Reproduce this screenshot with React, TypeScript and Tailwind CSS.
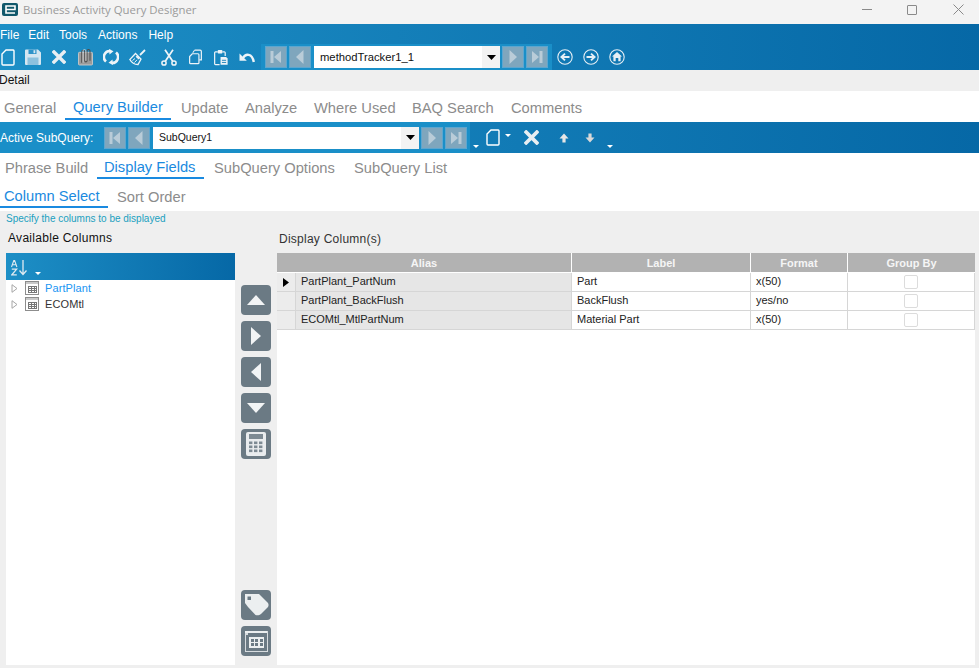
import React from "react";

const F = "[font-family:'Liberation_Sans',Arial,sans-serif]";

function NewDoc({ className = "" }: { className?: string }) {
  return (
    <svg width="14" height="17" viewBox="0 0 14 17" className={className}>
      <path d="M5 1H12.2A1 1 0 0 1 13 2V15A1 1 0 0 1 12 16H2A1 1 0 0 1 1 15V5Z" fill="none" stroke="#fff" strokeWidth="1.4" />
    </svg>
  );
}
const Save = () => (
  <svg width="16" height="16" viewBox="0 0 16 16">
    <path d="M0 1.5A1 1 0 0 1 1 .5H13L16 3.5V15A1 1 0 0 1 15 16H1A1 1 0 0 1 0 15Z" fill="#d5e6f1" />
    <rect x="3.5" y="0.5" width="8" height="4.5" fill="#2f93c9" />
    <rect x="8.5" y="1.2" width="1.8" height="3" fill="#d5e6f1" />
    <rect x="2.5" y="8.5" width="11" height="7.5" fill="#8dc1de" />
  </svg>
);
const Cross = ({ s = 14 }: { s?: number }) => (
  <svg width={s} height={s} viewBox="0 0 14 14">
    <path d="M2 2L12 12M12 2L2 12" stroke="#e8eef2" strokeWidth="3.4" strokeLinecap="square" fill="none" />
  </svg>
);
const Attach = () => (
  <svg width="15" height="18" viewBox="0 0 16 18">
    <rect x="0.5" y="4" width="15" height="13.5" rx="1" fill="#9a9a9a" stroke="#c9c9c9" />
    <path d="M4 15V3.5A1.6 1.6 0 0 1 7.2 3.5V13A1.2 1.2 0 0 0 9.6 13V2.5A1.6 1.6 0 0 1 12.8 2.5V13" fill="none" stroke="#4c4c4c" strokeWidth="1.1" />
    <path d="M5.4 15V2.5A1.5 1.5 0 0 1 8.4 2.5V13" fill="none" stroke="#dcdcdc" strokeWidth="0.8" />
  </svg>
);
const Refresh = () => (
  <svg width="16" height="16" viewBox="0 0 16 16">
    <path d="M3 12.5A6 6 0 0 1 7.5 2" fill="none" stroke="#eef4f8" strokeWidth="2.6" />
    <path d="M6 0L10.5 2.2L6.5 5.5Z" fill="#eef4f8" />
    <path d="M13 3.5A6 6 0 0 1 8.5 14" fill="none" stroke="#eef4f8" strokeWidth="2.6" />
    <path d="M10 16L5.5 13.8L9.5 10.5Z" fill="#eef4f8" />
  </svg>
);
const Broom = () => (
  <svg width="17" height="17" viewBox="0 0 17 17">
    <path d="M11 6L16 1" stroke="#eef4f8" strokeWidth="1.8" fill="none" />
    <path d="M6.5 4.5L12 10L9 15.5C6 15.5 2.5 13.5 0.8 10.5Z" fill="none" stroke="#eef4f8" strokeWidth="1.3" />
    <path d="M8 6.5L10.8 9.2L9.6 10.6L6.6 7.8Z" fill="#eef4f8" />
    <path d="M3.5 11.5L6 9.5M5.5 13.5L8 10.8" stroke="#eef4f8" strokeWidth="1" />
  </svg>
);
const Scissors = () => (
  <svg width="16" height="17" viewBox="0 0 16 17">
    <circle cx="3" cy="14" r="2.1" fill="none" stroke="#eef4f8" strokeWidth="1.5" />
    <circle cx="13" cy="14" r="2.1" fill="none" stroke="#eef4f8" strokeWidth="1.5" />
    <path d="M4.3 12.3L12 .8M11.7 12.3L4 .8" stroke="#eef4f8" strokeWidth="1.7" fill="none" />
  </svg>
);
const Copy = () => (
  <svg width="13" height="16" viewBox="0 0 14 16">
    <path d="M6 .7H12A1.3 1.3 0 0 1 13.3 2V11H11" fill="none" stroke="#eef4f8" strokeWidth="1.3" />
    <path d="M6 .7L4 3.5" fill="none" stroke="#eef4f8" strokeWidth="1.1" />
    <path d="M3.5 4.5H9.7A1 1 0 0 1 10.7 5.5V14.2A1 1 0 0 1 9.7 15.2H1.7A1 1 0 0 1 .7 14.2V7.5Z" fill="#1b87c0" stroke="#eef4f8" strokeWidth="1.3" />
  </svg>
);
const Paste = () => (
  <svg width="14" height="17" viewBox="0 0 15 17">
    <path d="M4 2.5H1.6A.9.9 0 0 0 .7 3.4V15.3A.9.9 0 0 0 1.6 16.2H6M9 2.5H11A.9.9 0 0 1 12 3.4V7" fill="none" stroke="#eef4f8" strokeWidth="1.3" />
    <rect x="4" y="0.5" width="5" height="3.6" rx="0.8" fill="#eef4f8" />
    <path d="M7 8H13L14.6 9.6V16.4H7Z" fill="#eef4f8" />
    <path d="M8.5 11.5H13M8.5 13.8H13" stroke="#1b82bb" strokeWidth="1" />
  </svg>
);
const Undo = () => (
  <svg width="16" height="11" viewBox="0 0 16 11">
    <path d="M4 6C6.5 1.5 13 1 14.8 10" fill="none" stroke="#eef4f8" strokeWidth="2.4" />
    <path d="M.5 1.5V8.8H7.8Z" fill="#eef4f8" />
  </svg>
);
const NavBtn = ({ dir }: { dir: "first" | "prev" | "next" | "last" }) => {
  const f = "#b9ccd8";
  return (
    <div className="flex h-[22px] w-[22px] items-center justify-center border border-[#5da6cf] bg-[#7fa6bd]">
      <svg width="14" height="14" viewBox="0 0 14 14">
        {dir === "first" && <><rect x="1.5" y="1" width="3" height="12" fill={f} /><path d="M12 1V13L5 7Z" fill={f} /></>}
        {dir === "prev" && <path d="M10.5 0V14L3 7Z" fill={f} />}
        {dir === "next" && <path d="M3.5 0V14L11 7Z" fill={f} />}
        {dir === "last" && <><rect x="9.5" y="1" width="3" height="12" fill={f} /><path d="M2 1V13L9 7Z" fill={f} /></>}
      </svg>
    </div>
  );
};
const Combo = ({ text, w, size }: { text: string; w: string; size: string }) => (
  <div className={`flex h-[22px] items-center bg-white pl-[6px] ${w}`}>
    <span className={`flex-1 text-[#111] ${size} ${F}`}>{text}</span>
    <div className="flex h-full w-[18px] items-center justify-center bg-[#f3f3f3]">
      <svg width="9" height="5" viewBox="0 0 9 5"><path d="M0 0H9L4.5 5Z" fill="#000" /></svg>
    </div>
  </div>
);
const Circle = ({ kind }: { kind: "back" | "fwd" | "home" }) => (
  <svg width="16" height="16" viewBox="0 0 16 16">
    <circle cx="8" cy="8" r="7.2" fill="none" stroke="#e6eff5" strokeWidth="1.1" />
    {kind === "back" && <path d="M12.5 8H5M8 4.6L4.4 8L8 11.4" fill="none" stroke="#e6eff5" strokeWidth="1.9" />}
    {kind === "fwd" && <path d="M3.5 8H11M8 4.6L11.6 8L8 11.4" fill="none" stroke="#e6eff5" strokeWidth="1.9" />}
    {kind === "home" && <path d="M8 3L13 7.5H11.6V12.2H9.3V9H6.7V12.2H4.4V7.5H3Z" fill="#e6eff5" />}
  </svg>
);
const Caret = () => (
  <svg width="6" height="3" viewBox="0 0 6 3"><path d="M0 0H6L3 3Z" fill="#fff" /></svg>
);
const Tab = ({ label, active, cls }: { label: string; active?: boolean; cls: string }) => (
  <div className={`flex items-center whitespace-nowrap ${cls} ${active ? "border-b-[2px] border-[#1a8ae0] text-[#1a8ae0]" : "text-[#8c8c8c]"}`}>
    {label}
  </div>
);
const Side = ({ children }: { children: React.ReactNode }) => (
  <div className="flex h-[30px] w-[30px] items-center justify-center rounded-[4px] bg-[#6b7a84]">{children}</div>
);
const GridIcon = () => (
  <svg width="14" height="14" viewBox="0 0 14 14" shapeRendering="crispEdges">
    <rect x="0.5" y="0.5" width="13" height="13" fill="#fff" stroke="#8d8d8d" />
    <rect x="1" y="1" width="12" height="2" fill="#c9c9c9" />
    <path d="M3 5.5H11.5M3 7.5H11.5M3 9.5H11.5M3 11.5H11.5M3.5 5V12M6.5 5V12M9.5 5V12M11.5 5V12" stroke="#777" strokeWidth="1" fill="none" />
  </svg>
);
const Tri = () => (
  <svg width="7" height="9" viewBox="0 0 7 9"><path d="M1 .7L6 4.5L1 8.3Z" fill="#fff" stroke="#a6a6a6" /></svg>
);
const TreeRow = ({ label, active }: { label: string; active?: boolean }) => (
  <div className="flex h-[16px] items-center pl-[5px]">
    <Tri />
    <span className="ml-[7px] flex"><GridIcon /></span>
    <span className={`ml-[6px] text-[11px] tracking-[0.1px] ${active ? "text-[#2196f3]" : "text-[#333]"} ${F}`}>{label}</span>
  </div>
);
const rows = [
  { alias: "PartPlant_PartNum", label: "Part", fmt: "x(50)", sel: true },
  { alias: "PartPlant_BackFlush", label: "BackFlush", fmt: "yes/no" },
  { alias: "ECOMtl_MtlPartNum", label: "Material Part", fmt: "x(50)" },
];

export default function App() {
  return (
    <div className={`flex h-[668px] w-[979px] flex-col overflow-hidden bg-[#efefef] ${F}`}>
      {/* Title bar */}
      <div className="flex h-[24px] items-center bg-[#f3f3f3] pb-[5px]">
        <div className="ml-[2px] flex h-[13px] w-[16px] items-center justify-center rounded-[2px] bg-[#11586b]">
          <svg width="11" height="9" viewBox="0 0 11 9">
            <path d="M1 4.5H10V1H1V8H10" fill="none" stroke="#fff" strokeWidth="1.6" />
          </svg>
        </div>
        <span className="ml-[5px] text-[11.4px] text-[#9a9a9a] [font-family:'Open_Sans',sans-serif]">Business Activity Query Designer</span>
        <div className="ml-auto flex items-center">
          <div className="mr-[35px] h-[1px] w-[10px] bg-[#8a8a8a]" />
          <div className="mr-[36px] h-[10px] w-[10px] rounded-[1px] border border-[#8a8a8a]" />
          <svg width="11" height="11" viewBox="0 0 11 11" className="mr-[15px]">
            <path d="M.5 .5L10.5 10.5M10.5 .5L.5 10.5" stroke="#8a8a8a" strokeWidth="1" />
          </svg>
        </div>
      </div>

      {/* Menu + main toolbar */}
      <div className="flex h-[46px] flex-col bg-gradient-to-r from-[#1d8fc6] to-[#0668a6]">
        <div className="flex h-[20px] items-center pt-[2px] text-[12px] text-white">
          <span>File</span>
          <span className="ml-[9px]">Edit</span>
          <span className="ml-[10px]">Tools</span>
          <span className="ml-[11px]">Actions</span>
          <span className="ml-[11px]">Help</span>
        </div>
        <div className="flex h-[26px] items-center">
          <div className="ml-[1px] flex w-[260px] items-center">
            <NewDoc />
            <span className="ml-[10px] flex"><Save /></span>
            <span className="ml-[11px] flex"><Cross /></span>
            <span className="ml-[12px] flex"><Attach /></span>
            <span className="ml-[10px] flex"><Refresh /></span>
            <span className="ml-[10px] flex"><Broom /></span>
            <span className="ml-[15px] flex"><Scissors /></span>
            <span className="ml-[12px] flex"><Copy /></span>
            <span className="ml-[12px] flex"><Paste /></span>
            <span className="ml-[11px] flex"><Undo /></span>
          </div>
          <div className="flex h-full items-center gap-[2px] bg-[#1a8fc8] px-[4px]">
            <NavBtn dir="first" />
            <NavBtn dir="prev" />
            <div className="-ml-[1px] w-0" />
            <Combo text="methodTracker1_1" w="w-[186px]" size="text-[11.25px]" />
            <NavBtn dir="next" />
            <NavBtn dir="last" />
          </div>
          <div className="ml-[5px] flex items-center gap-[10px]">
            <Circle kind="back" />
            <Circle kind="fwd" />
            <Circle kind="home" />
          </div>
        </div>
      </div>

      <div className="flex h-[21px] items-center pb-[1px] text-[12px] text-[#111]">
        <span className="-ml-[1px]">Detail</span>
      </div>

      {/* Tabs */}
      <div className="flex h-[31px] items-stretch bg-white pb-[2px] pt-[5px] text-[14.7px]">
        <Tab label="General" cls="w-[65px] pl-[4px]" />
        <Tab label="Query Builder" active cls="w-[106px] pl-[8px]" />
        <Tab label="Update" cls="w-[64px] pl-[10px]" />
        <Tab label="Analyze" cls="w-[69px] pl-[10px]" />
        <Tab label="Where Used" cls="w-[98px] pl-[10px]" />
        <Tab label="BAQ Search" cls="w-[99px] pl-[10px]" />
        <Tab label="Comments" cls="pl-[10px]" />
      </div>

      {/* SubQuery bar */}
      <div className="flex h-[31px] items-center bg-gradient-to-r from-[#1d8fc6] to-[#0668a6]">
        <div className="flex h-full w-[470px] items-center gap-[2px] bg-[#1a8fc8]">
          <span className="w-[102px] whitespace-nowrap text-[12px] text-white">Active SubQuery:</span>
          <NavBtn dir="first" />
          <NavBtn dir="prev" />
          <div className="-ml-[1px] w-0" />
          <Combo text="SubQuery1" w="w-[266px]" size="text-[10.5px]" />
          <NavBtn dir="next" />
          <NavBtn dir="last" />
        </div>
        <span className="ml-[3px] mt-[18px] flex"><Caret /></span>
        <span className="ml-[7px] flex"><NewDoc /></span>
        <span className="mb-[5px] ml-[5px] flex"><Caret /></span>
        <span className="ml-[13px] flex"><Cross s={15} /></span>
        <svg width="10" height="10" viewBox="0 0 10 10" className="ml-[20px]"><path d="M5 .5L9.5 5.5H6.6V9.5H3.4V5.5H.5Z" fill="#e6e6e6" /></svg>
        <svg width="10" height="10" viewBox="0 0 10 10" className="ml-[16px]"><path d="M5 9.5L9.5 4.5H6.6V.5H3.4V4.5H.5Z" fill="#d8d8d8" /></svg>
        <span className="ml-[12px] mt-[18px] flex"><Caret /></span>
      </div>

      {/* Sub tabs */}
      <div className="flex h-[28px] items-stretch bg-white pb-[2px] pt-[4px] text-[14.7px]">
        <Tab label="Phrase Build" cls="w-[97px] pl-[5px]" />
        <Tab label="Display Fields" active cls="w-[107px] pl-[7px]" />
        <Tab label="SubQuery Options" cls="w-[140px] pl-[10px]" />
        <Tab label="SubQuery List" cls="pl-[10px]" />
      </div>
      <div className="flex h-[30px] items-stretch bg-white pb-[3px] pt-[5px] text-[14.7px]">
        <Tab label="Column Select" active cls="w-[108px] pl-[4px]" />
        <Tab label="Sort Order" cls="pl-[9px]" />
      </div>

      {/* Content */}
      <div className="flex h-[15px] items-center pl-[6px] pt-[1px] text-[10px] leading-none text-[#1a9fc0]">
        Specify the columns to be displayed
      </div>
      <div className="flex min-h-0 flex-1 pb-[3px] pl-[6px] pr-[4px]">
        {/* Available columns */}
        <div className="flex w-[229px] flex-col">
          <div className="flex h-[27px] items-center pb-[4px] pl-[2px] text-[12px] tracking-[0.3px] text-[#111]">Available Columns</div>
          <div className="flex h-[27px] items-end bg-gradient-to-r from-[#1d8fc6] to-[#0668a6] pb-[4px] pl-[5px]">
            <svg width="18" height="16" viewBox="0 0 18 16">
              <path d="M.5 7L2.8 .5H3.6L5.9 7M1.5 4.8H4.9" fill="none" stroke="#dfeaf1" strokeWidth="1.1" />
              <path d="M.8 9.2H5.6L.8 14.8H5.8" fill="none" stroke="#dfeaf1" strokeWidth="1.3" />
              <path d="M12 0V14M8.5 10.5L12 14.5L15.5 10.5" fill="none" stroke="#dfeaf1" strokeWidth="1.3" />
            </svg>
            <span className="mb-[1px] ml-[6px] flex"><Caret /></span>
          </div>
          <div className="flex-1 bg-white">
            <TreeRow label="PartPlant" active />
            <TreeRow label="ECOMtl" />
          </div>
        </div>

        {/* Move buttons */}
        <div className="flex w-[42px] flex-col items-center pt-[59px]">
          <div className="flex flex-col gap-[6px]">
            <Side><svg width="20" height="10" viewBox="0 0 20 10"><path d="M10 0L19 10H1Z" fill="#f2f4f5" /></svg></Side>
            <Side><svg width="10" height="20" viewBox="0 0 10 20"><path d="M0 1L10 10L0 19Z" fill="#f2f4f5" /></svg></Side>
            <Side><svg width="10" height="20" viewBox="0 0 10 20"><path d="M10 1L0 10L10 19Z" fill="#f2f4f5" /></svg></Side>
            <Side><svg width="20" height="10" viewBox="0 0 20 10"><path d="M1 0H19L10 10Z" fill="#f2f4f5" /></svg></Side>
            <Side>
              <svg width="20" height="24" viewBox="0 0 20 24">
                <rect width="20" height="24" rx="2" fill="#e9ecee" />
                <rect x="3" y="2" width="14" height="5" fill="#7d8a93" />
                {[9.5, 13.5, 17.5].map((y) => [3, 8, 13].map((x) => <rect key={`${x}-${y}`} x={x} y={y} width="3.4" height="2.6" fill="#7d8a93" />))}
              </svg>
            </Side>
          </div>
          <div className="mb-[9px] mt-auto flex flex-col gap-[6px]">
            <Side>
              <svg width="26" height="26" viewBox="0 0 26 26">
                <path d="M2 2H16L25 11C26 13 25.5 14 25 15L18 22C16.5 23.5 14 23.5 12.5 23L5 15L2 11Z" fill="#eceff0" />
                <rect x="4.5" y="4.5" width="3.5" height="3.5" fill="#6b7a84" />
              </svg>
            </Side>
            <Side>
              <svg width="24" height="22" viewBox="0 0 24 22" shapeRendering="crispEdges">
                <rect x="1" y="1" width="22" height="20" fill="none" stroke="#d7dcdf" strokeWidth="1" />
                <rect x="1" y="1" width="22" height="1.5" fill="#eceff0" />
                <rect x="2" y="3" width="2" height="2" fill="#d7dcdf" />
                <rect x="5" y="7" width="15" height="11" fill="#eceff0" />
                {[8.5, 13].map((y) => [6.5, 11.2, 15.8].map((x) => <rect key={`${x}-${y}`} x={x} y={y} width="3" height="3" fill="#6b7a84" />))}
              </svg>
            </Side>
          </div>
        </div>

        {/* Display columns */}
        <div className="flex min-w-0 flex-1 flex-col">
          <div className="flex h-[27px] items-center pb-[1px] pl-[2px] text-[12px] tracking-[0.25px] text-[#333]">Display Column(s)</div>
          <div className="flex-1 bg-white text-[11px] text-[#222]">
            <div className="grid h-[20px] grid-cols-[294px_178px_96px_1fr] gap-x-[1px] bg-white pb-[1px] text-[11px] font-bold text-[#f5f5f5]">
              {["Alias", "Label", "Format", "Group By"].map((h) => (
                <div key={h} className="flex items-center justify-center bg-[#b2b2b2] pt-[1px]">{h}</div>
              ))}
            </div>
            {rows.map((r) => (
              <div key={r.alias} className="grid h-[19px] grid-cols-[294px_178px_96px_1fr] gap-x-[1px] border-b border-[#d6d6d6]">
                <div className="flex">
                  <div className="flex w-[19px] items-center justify-center border-r border-[#d6d6d6] bg-[#ececec]">
                    {r.sel && <svg width="6" height="9" viewBox="0 0 6 9"><path d="M0 0L6 4.5L0 9Z" fill="#000" /></svg>}
                  </div>
                  <div className="flex flex-1 items-center bg-[#e6e6e6] pb-[1px] pl-[5px]">{r.alias}</div>
                </div>
                <div className="-ml-[1px] flex items-center border-l border-[#d6d6d6] pb-[1px] pl-[5px]">{r.label}</div>
                <div className="-ml-[1px] flex items-center border-l border-[#d6d6d6] pb-[1px] pl-[5px]">{r.fmt}</div>
                <div className="-ml-[1px] flex items-center justify-center border-x border-[#d6d6d6]">
                  <div className="h-[14px] w-[14px] rounded-[2px] border border-[#dcdcdc] bg-white" />
                </div>
              </div>
            ))}
          </div>
        </div>
      </div>
    </div>
  );
}
